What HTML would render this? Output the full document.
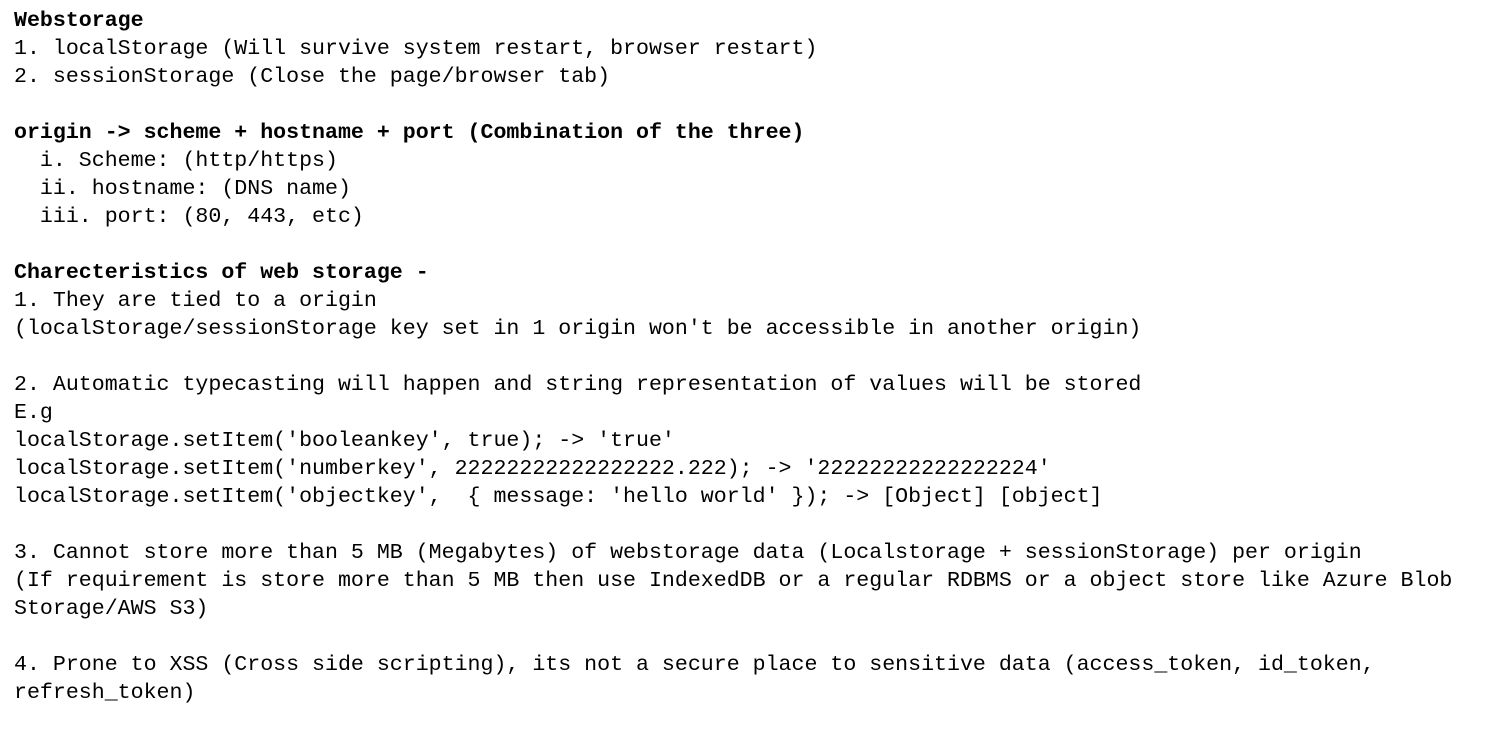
<!DOCTYPE html>
<html><head><meta charset="utf-8"><style>
html,body{margin:0;padding:0;background:#fff;width:1486px;height:732px;overflow:hidden}
pre{margin:0;padding:7px 0 0 14px;font-family:"Liberation Mono",monospace;font-size:21.6px;line-height:28px;color:#000;white-space:pre}
b{font-weight:bold}
</style></head><body><pre><b>Webstorage</b>
1. localStorage (Will survive system restart, browser restart)
2. sessionStorage (Close the page/browser tab)

<b>origin -&gt; scheme + hostname + port (Combination of the three)</b>
  i. Scheme: (http/https)
  ii. hostname: (DNS name)
  iii. port: (80, 443, etc)

<b>Charecteristics of web storage -</b>
1. They are tied to a origin
(localStorage/sessionStorage key set in 1 origin won't be accessible in another origin)

2. Automatic typecasting will happen and string representation of values will be stored
E.g
localStorage.setItem('booleankey', true); -&gt; 'true'
localStorage.setItem('numberkey', 22222222222222222.222); -&gt; '22222222222222224'
localStorage.setItem('objectkey',  { message: 'hello world' }); -&gt; [Object] [object]

3. Cannot store more than 5 MB (Megabytes) of webstorage data (Localstorage + sessionStorage) per origin
(If requirement is store more than 5 MB then use IndexedDB or a regular RDBMS or a object store like Azure Blob
Storage/AWS S3)

4. Prone to XSS (Cross side scripting), its not a secure place to sensitive data (access_token, id_token,
refresh_token)</pre></body></html>
